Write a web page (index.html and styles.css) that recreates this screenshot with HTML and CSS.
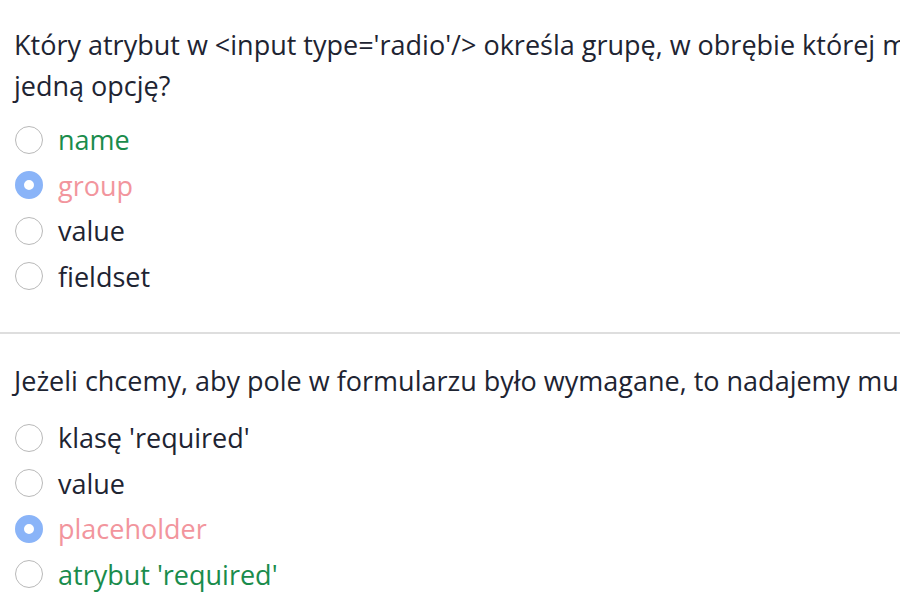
FILE: index.html
```html
<!DOCTYPE html>
<html lang="pl">
<head>
<meta charset="utf-8">
<title>Quiz</title>
<link rel="stylesheet" href="styles.css">
</head>
<body>
<div class="quiz">
  <section class="question">
    <p class="q-text">Który atrybut w &lt;input type='radio'/&gt; określa grupę, w obrębie której można zaznaczyć tylko<br>jedną opcję?</p>
    <div class="options">
      <label class="option correct"><input type="radio" name="q1"><span>name</span></label>
      <label class="option wrong"><input type="radio" name="q1" checked><span>group</span></label>
      <label class="option"><input type="radio" name="q1"><span>value</span></label>
      <label class="option"><input type="radio" name="q1"><span>fieldset</span></label>
    </div>
  </section>
  <hr class="divider">
  <section class="question">
    <p class="q-text">Jeżeli chcemy, aby pole w formularzu było wymagane, to nadajemy mu:</p>
    <div class="options">
      <label class="option"><input type="radio" name="q2"><span>klasę 'required'</span></label>
      <label class="option"><input type="radio" name="q2"><span>value</span></label>
      <label class="option wrong"><input type="radio" name="q2" checked><span>placeholder</span></label>
      <label class="option correct"><input type="radio" name="q2"><span>atrybut 'required'</span></label>
    </div>
  </section>
</div>
</body>
</html>
```
FILE: styles.css
```css
html, body {
  margin: 0;
  padding: 0;
  overflow: hidden;
  background: #ffffff;
}
body {
  font-family: "Open Sans", "Noto Sans", sans-serif;
  font-size: 27px;
  color: #1e2432;
}
.quiz {
  width: 1300px;
  padding: 0 14px;
}
.question {
  padding-top: 24px;
}
.q-text {
  margin: 0;
  line-height: 41px;
}
.options {
  display: flex;
  flex-direction: column;
  margin-top: 11px;
}
.divider + .question .options {
  margin-top: 14px;
}
.option {
  display: flex;
  align-items: center;
  gap: 15px;
  height: 45.5px;
}
.option input {
  appearance: none;
  -webkit-appearance: none;
  margin: 0 0 0 1px;
  width: 28px;
  height: 28px;
  box-sizing: border-box;
  border: 1px solid #b9b9b9;
  border-radius: 50%;
  background: #fff;
  flex: none;
}
.option input:checked {
  border: 9px solid #8ab4f8;
}
.correct span {
  color: #1a8c4c;
}
.wrong span {
  color: #f2959d;
}
.divider {
  border: 0;
  height: 2px;
  background: #dedede;
  margin: 33px -14px 0 -14px;
}
.divider + .question {
  padding-top: 26px;
}
```
